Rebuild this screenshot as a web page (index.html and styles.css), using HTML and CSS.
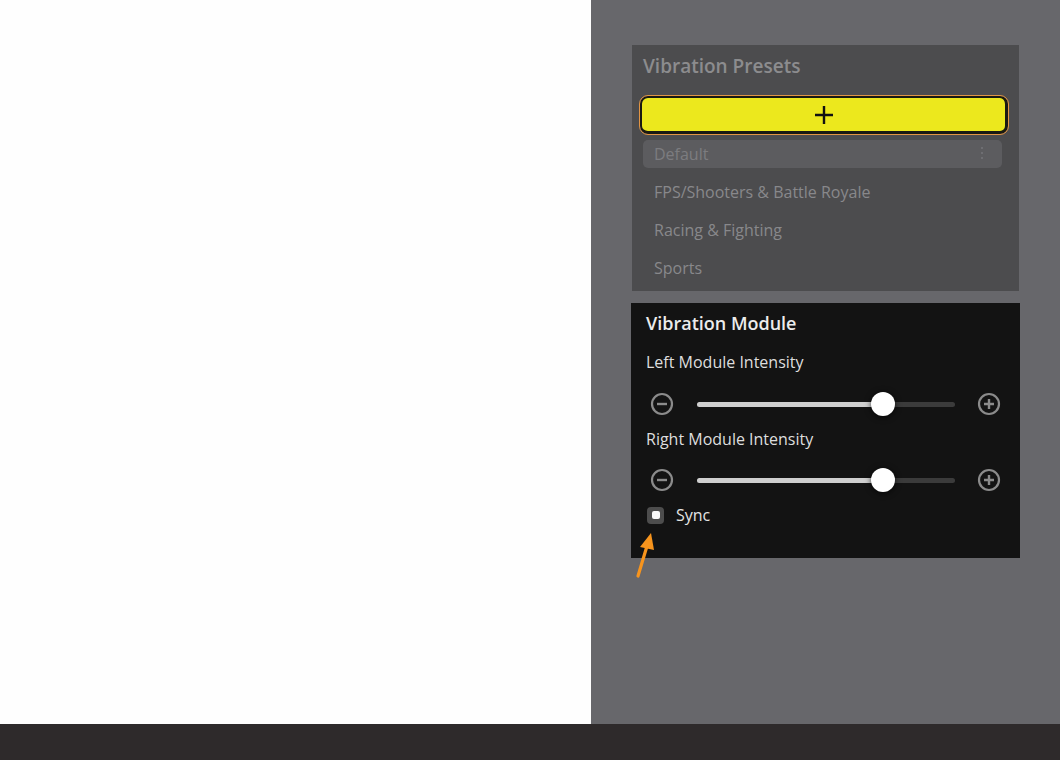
FILE: index.html
```html
<!DOCTYPE html>
<html>
<head>
<meta charset="utf-8">
<link rel="stylesheet" href="styles.css">
</head>
<body>
<div class="page">
  <div class="blank"></div>
  <aside class="side">
    <section class="presets">
      <h2 class="presets-title">Vibration Presets</h2>
      <button class="add-btn" type="button" aria-label="Add preset">
        <svg width="22" height="22" viewBox="0 0 22 22"><path d="M11 2v18M2 11h18" stroke="#111" stroke-width="2.4"/></svg>
      </button>
      <ul class="preset-list">
        <li class="preset active">Default<span class="kebab"><i></i><i></i><i></i></span></li>
        <li class="preset">FPS/Shooters &amp; Battle Royale</li>
        <li class="preset">Racing &amp; Fighting</li>
        <li class="preset">Sports</li>
      </ul>
    </section>
    <section class="module">
      <h2 class="module-title">Vibration Module</h2>
      <div class="label first">Left Module Intensity</div>
      <div class="slider-row">
        <span class="ico"><svg width="24" height="24" viewBox="0 0 24 24"><circle cx="12" cy="12" r="10" fill="none" stroke="#8b8b8b" stroke-width="2.2"/><path d="M7 12h10" stroke="#8b8b8b" stroke-width="2.4"/></svg></span>
        <div class="track"><div class="fill" style="width:72%"></div><div class="thumb" style="left:72%"></div></div>
        <span class="ico"><svg width="24" height="24" viewBox="0 0 24 24"><circle cx="12" cy="12" r="10" fill="none" stroke="#8b8b8b" stroke-width="2.2"/><path d="M7 12h10M12 7v10" stroke="#8b8b8b" stroke-width="2.4"/></svg></span>
      </div>
      <div class="label second">Right Module Intensity</div>
      <div class="slider-row row2">
        <span class="ico"><svg width="24" height="24" viewBox="0 0 24 24"><circle cx="12" cy="12" r="10" fill="none" stroke="#8b8b8b" stroke-width="2.2"/><path d="M7 12h10" stroke="#8b8b8b" stroke-width="2.4"/></svg></span>
        <div class="track"><div class="fill" style="width:72%"></div><div class="thumb" style="left:72%"></div></div>
        <span class="ico"><svg width="24" height="24" viewBox="0 0 24 24"><circle cx="12" cy="12" r="10" fill="none" stroke="#8b8b8b" stroke-width="2.2"/><path d="M7 12h10M12 7v10" stroke="#8b8b8b" stroke-width="2.4"/></svg></span>
      </div>
      <label class="sync"><span class="check"><span class="check-dot"></span></span>Sync</label>
    </section>
    <svg class="arrow" width="30" height="50" viewBox="0 0 30 50">
      <path d="M8 46 L17 16" stroke="#f7941d" stroke-width="3.2" stroke-linecap="round"/>
      <path d="M21 3 L10 17 L24 20 Z" fill="#f7941d"/>
    </svg>
  </aside>
  <footer class="bottom"></footer>
</div>
</body>
</html>
```

FILE: styles.css
```css
html, body {
  margin: 0;
  padding: 0;
}
body {
  font-family: "Open Sans", "Noto Sans", sans-serif;
  background: #fff;
}
.page {
  display: grid;
  grid-template-columns: 591px 1fr;
  grid-template-rows: 724px 36px;
  width: 1060px;
  height: 760px;
}
.blank {
  background: #fefefe;
}
.side {
  background: #67676b;
  padding: 45px 0 0 41px;
  position: relative;
}
.bottom {
  grid-column: 1 / 3;
  background: #2e2a2b;
}
.presets {
  width: 387px;
  height: 246px;
  box-sizing: border-box;
  background: #4c4c4e;
  padding: 8px 0 0 8px;
}
.presets-title {
  margin: 0 0 0 3px;
  font-size: 19px;
  line-height: 26px;
  font-weight: 600;
  color: #8c8c8e;
}
.add-btn {
  display: flex;
  align-items: center;
  justify-content: center;
  margin-top: 17px;
  width: 368px;
  height: 38px;
  box-sizing: border-box;
  border: 2px solid #1a1a12;
  border-right-width: 3px;
  border-bottom-width: 3px;
  outline: 1px solid #e29545;
  border-radius: 8px;
  background: #ece81d;
  padding: 0;
}
.preset-list {
  list-style: none;
  margin: 6px 0 0 3px;
  padding: 0;
  width: 359px;
}
.preset {
  height: 28px;
  line-height: 28px;
  padding-left: 11px;
  font-size: 16px;
  color: #88888b;
  margin-bottom: 10px;
  position: relative;
}
.preset.active {
  background: #5c5c5f;
  border-radius: 5px;
  color: #7c7c80;
}
.kebab {
  position: absolute;
  right: 19px;
  top: 7px;
  display: flex;
  flex-direction: column;
  gap: 3px;
}
.kebab i {
  display: block;
  width: 2px;
  height: 2px;
  background: #6e6e72;
}
.module {
  margin: 12px 0 0 -1px;
  width: 389px;
  height: 255px;
  box-sizing: border-box;
  background: #131313;
  padding: 8px 15px 0 15px;
  display: flex;
  flex-direction: column;
}
.module-title {
  margin: 0;
  font-size: 18px;
  line-height: 24px;
  font-weight: 600;
  color: #ececec;
}
.label {
  font-size: 16px;
  line-height: 22px;
  color: #dedede;
}
.label.first { margin-top: 16px; }
.label.second { margin-top: 9px; }
.slider-row {
  display: flex;
  align-items: center;
  height: 30px;
  margin-top: 16px;
}
.slider-row.row2 { margin-top: 15px; }
.ico {
  width: 32px;
  display: flex;
  justify-content: center;
}
.track {
  flex: 1;
  margin: 0 18px 0 19px;
  height: 5px;
  border-radius: 3px;
  background: #3b3b3b;
  position: relative;
}
.fill {
  height: 100%;
  border-radius: 3px;
  background: #cfcfcf;
}
.thumb {
  position: absolute;
  top: 50%;
  width: 24px;
  height: 24px;
  margin: -12px 0 0 -12px;
  border-radius: 50%;
  background: #fff;
  box-shadow: 0 1px 6px rgba(0, 0, 0, 0.7);
}
.sync {
  display: flex;
  align-items: center;
  gap: 12px;
  margin-top: 10px;
  height: 20px;
  font-size: 16px;
  color: #e4e4e4;
  padding-left: 1px;
}
.check {
  width: 17px;
  height: 17px;
  border-radius: 4px;
  background: #4d4d4d;
  display: flex;
  align-items: center;
  justify-content: center;
}
.check-dot {
  width: 8px;
  height: 8px;
  border-radius: 2px;
  background: #fafafa;
}
.arrow {
  position: absolute;
  left: 39px;
  top: 530px;
}
```
